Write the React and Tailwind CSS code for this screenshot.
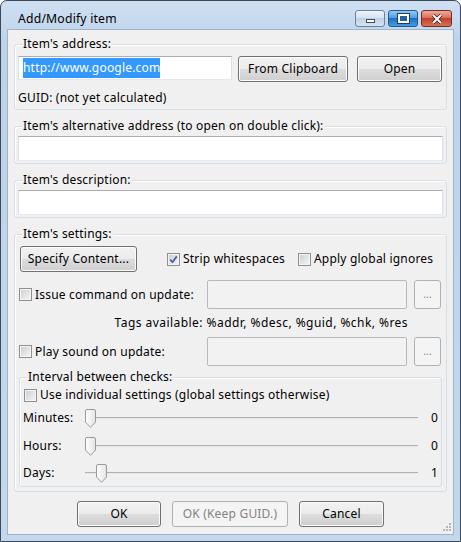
import React from "react";

const btn =
  "h-[26px] rounded-[3px] border border-[#707070] bg-[linear-gradient(#f2f2f2_0%,#ebebeb_50%,#dddddd_50%,#cfcfcf_100%)] shadow-[inset_0_0_0_1px_#fcfcfc] text-black flex items-center justify-center shrink-0";
const btnOff =
  "rounded-[3px] border border-[#adb2b5] bg-[#f4f4f4] text-[#838383] flex items-center justify-center shrink-0";
const edit = "bg-white border border-[#dbdfe6] border-t-[#abadb3] border-b-[#e3e9ef]";
const editOff = "h-[29px] rounded-[2px] border border-[#b9b9b9] bg-[#f2f2f2] shrink-0";

function Check({ checked }) {
  return (
    <span className="relative w-[13px] h-[13px] shrink-0 border border-[#8e8f8f] bg-[linear-gradient(135deg,#c9cdd3,#f7f7f7)] shadow-[inset_0_0_0_1px_#f4f4f4]">
      {checked && (
        <svg className="absolute left-[1px] top-[1px]" width="9" height="9" viewBox="0 0 9 9">
          <path d="M1.2 4.6 L3.5 7 L7.8 1.4" fill="none" stroke="#4a68a0" strokeWidth="1.8" />
        </svg>
      )}
    </span>
  );
}

function Group({ label, className, children }) {
  return (
    <div className={"relative border border-[#d5dfe5] rounded-[3px] shadow-[inset_1px_1px_0_#fff] " + className}>
      <span className="absolute -top-[9px] left-[7px] px-[1px] bg-[#f0f0f0] leading-[16px]">{label}</span>
      {children}
    </div>
  );
}

function Slider({ label, value, thumb }) {
  return (
    <div className="flex items-center h-[20px]">
      <span className="w-[61px] ml-[3px]">{label}</span>
      <div className="relative w-[334px] h-[20px]">
        <div className="absolute left-[1px] right-0 top-[9px] h-[2px] border-t border-[#b0b0b0] bg-[#e8e8e8]" />
        <svg className="absolute top-[1px]" style={{ left: thumb }} width="11" height="19" viewBox="0 0 11 19">
          <defs>
            <linearGradient id="tg" x1="0" y1="0" x2="1" y2="0">
              <stop offset="0" stopColor="#ffffff" />
              <stop offset="1" stopColor="#e4e4e4" />
            </linearGradient>
          </defs>
          <path d="M0.5 2 Q0.5 0.5 2 0.5 H9 Q10.5 0.5 10.5 2 V13 L5.5 18.3 L0.5 13 Z" fill="url(#tg)" stroke="#9a9a9a" />
        </svg>
      </div>
      <span className="w-[20px] text-right">{value}</span>
    </div>
  );
}

export default function App() {
  return (
    <div className="w-[461px] h-[542px] font-['Noto_Sans',sans-serif] text-[12px] tracking-[0.2px] text-black">
      <div className="w-[461px] h-[542px] flex flex-col rounded-t-[7px] border border-[#3b4a5a] bg-[linear-gradient(#cfe0f3,#bed3ea_40px,#c3d7ed)] px-[6px] pb-[6px]">
        {/* Title bar */}
        <div className="relative h-[28px] shrink-0">
          <span className="absolute left-[11px] top-[8px] text-[12.2px] leading-[20px]">Add/Modify item</span>
          <div className="absolute right-[2px] top-[9px] flex gap-[3px]">
            <div className="w-[30px] h-[17px] rounded-[3px] border border-[#6c8096] bg-[linear-gradient(#eef4fb,#d3e1f1_50%,#bfd1e8_50%,#d6e3f3)] flex items-end justify-center pb-[3px]">
              <div className="w-[9px] h-[4px] bg-white border border-[#3f4b5a]" />
            </div>
            <div className="w-[30px] h-[17px] rounded-[3px] border border-[#2c5685] bg-[linear-gradient(#8ec9f5,#4a9be0_50%,#1f6fc2_50%,#3fa0e8)] flex items-center justify-center">
              <div className="w-[11px] h-[9px] border-[2px] border-white shadow-[0_0_0_1px_#243c5c] bg-[#2a5f9a]" />
            </div>
            <div className="w-[31px] h-[17px] rounded-[3px] border border-[#7b2c22] bg-[linear-gradient(#edaa9c,#d66a55_50%,#c0402a_50%,#d9715a)] flex items-center justify-center">
              <svg width="12" height="10" viewBox="0 0 12 10">
                <path d="M2 1 L10 9 M10 1 L2 9" stroke="#3d1a14" strokeWidth="3.4" />
                <path d="M2 1 L10 9 M10 1 L2 9" stroke="#fff" strokeWidth="2" />
              </svg>
            </div>
          </div>
        </div>

        {/* Client area */}
        <div className="relative flex-1 border border-[#9fb4ca] bg-[#f0f0f0] px-[6px] flex flex-col">
          {/* Address */}
          <Group label="Item's address:" className="mt-[14px] h-[66px]">
            <div className="flex items-start mt-[11px] ml-[3px]">
              <div className={"w-[214px] h-[24px] pl-[4px] flex items-center " + edit}>
                <span className="h-[20px] leading-[20px] bg-[#3399ff] text-white">http://www.google.com</span>
              </div>
              <div className={btn + " w-[110px] ml-[6px]"}>From Clipboard</div>
              <div className={btn + " w-[85px] ml-[9px]"}>Open</div>
            </div>
            <div className="mt-[8px] ml-[3px] leading-[16px]">GUID: (not yet calculated)</div>
          </Group>

          <Group label="Item's alternative address (to open on double click):" className="mt-[16px] h-[38px]">
            <div className={"mt-[9px] mx-[3px] h-[25px] " + edit} />
          </Group>

          <Group label="Item's description:" className="mt-[16px] h-[38px]">
            <div className={"mt-[9px] mx-[3px] h-[25px] " + edit} />
          </Group>

          {/* Settings */}
          <Group label="Item's settings:" className="mt-[16px] h-[258px]">
            <div className="flex items-center mt-[11px] ml-[5px]">
              <div className={btn + " w-[117px]"}>Specify Content...</div>
              <div className="flex items-center gap-[3px] ml-[30px] w-[131px]">
                <Check checked />
                <span>Strip whitespaces</span>
              </div>
              <div className="flex items-center gap-[3px]">
                <Check />
                <span>Apply global ignores</span>
              </div>
            </div>

            <div className="flex items-center mt-[8px] ml-[4px]">
              <div className="flex items-center gap-[3px] w-[188px]">
                <Check />
                <span>Issue command on update:</span>
              </div>
              <div className={editOff + " w-[200px]"} />
              <div className={btnOff + " h-[29px] w-[27px] ml-[7px] text-[10px]"}>...</div>
            </div>

            <div className="mt-[6px] w-[393px] text-right leading-[16px] tracking-[0.45px]">
              Tags available: %addr, %desc, %guid, %chk, %res
            </div>

            <div className="flex items-center mt-[6px] ml-[4px]">
              <div className="flex items-center gap-[3px] w-[188px]">
                <Check />
                <span>Play sound on update:</span>
              </div>
              <div className={editOff + " w-[200px]"} />
              <div className={btnOff + " h-[29px] w-[27px] ml-[7px] text-[10px]"}>...</div>
            </div>

            <Group label="Interval between checks:" className="mt-[11px] ml-[4px] w-[423px] h-[110px]">
              <div className="flex items-center gap-[3px] mt-[9px] ml-[4px] h-[16px]">
                <Check />
                <span>Use individual settings (global settings otherwise)</span>
              </div>
              <div className="mt-[5px]">
                <Slider label="Minutes:" value="0" thumb={1} />
              </div>
              <div className="mt-[8px]">
                <Slider label="Hours:" value="0" thumb={1} />
              </div>
              <div className="mt-[7px]">
                <Slider label="Days:" value="1" thumb={12} />
              </div>
            </Group>
          </Group>

          {/* Dialog buttons */}
          <div className="flex justify-center gap-[11px] mt-[9px]">
            <div className={btn + " w-[84px]"}>OK</div>
            <div className={btnOff + " h-[26px] w-[116px]"}>OK (Keep GUID.)</div>
            <div className={btn + " w-[85px]"}>Cancel</div>
          </div>

          {/* size grip */}
          <svg className="absolute right-[1px] bottom-[2px]" width="10" height="10" viewBox="0 0 10 10">
            <g fill="#b4b8bd">
              <rect x="7" y="1" width="2" height="2" />
              <rect x="4" y="4" width="2" height="2" />
              <rect x="7" y="4" width="2" height="2" />
              <rect x="1" y="7" width="2" height="2" />
              <rect x="4" y="7" width="2" height="2" />
              <rect x="7" y="7" width="2" height="2" />
            </g>
          </svg>
        </div>
      </div>
    </div>
  );
}
